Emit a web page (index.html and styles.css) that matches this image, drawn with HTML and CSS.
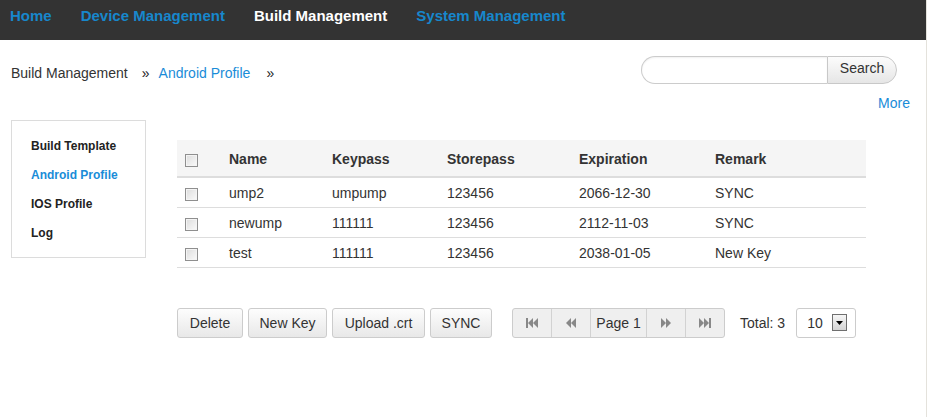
FILE: index.html
```html
<!DOCTYPE html>
<html>
<head>
<meta charset="utf-8">
<link rel="stylesheet" href="styles.css">
</head>
<body>
<div class="page">
  <nav class="topnav">
    <a class="nav-item">Home</a>
    <a class="nav-item">Device Management</a>
    <a class="nav-item active">Build Management</a>
    <a class="nav-item">System Management</a>
  </nav>

  <div class="toprow">
    <div class="breadcrumb">
      <span class="crumb">Build Management</span>
      <span class="sep">»</span>
      <a class="crumb link">Android Profile</a>
      <span class="sep sep-last">»</span>
    </div>
    <div class="search">
      <input class="search-input" type="text">
      <button class="search-btn">Search</button>
    </div>
  </div>
  <div class="morerow"><a class="more">More</a></div>

  <div class="content">
    <aside class="sidebar">
      <a class="side-item">Build Template</a>
      <a class="side-item active">Android Profile</a>
      <a class="side-item">IOS Profile</a>
      <a class="side-item">Log</a>
    </aside>

    <main class="main">
      <table class="grid">
        <thead>
          <tr>
            <th class="c-cb"><span class="cb"></span></th>
            <th class="c-name">Name</th>
            <th class="c-key">Keypass</th>
            <th class="c-store">Storepass</th>
            <th class="c-exp">Expiration</th>
            <th class="c-rem">Remark</th>
          </tr>
        </thead>
        <tbody>
          <tr>
            <td class="c-cb"><span class="cb"></span></td>
            <td>ump2</td><td>umpump</td><td>123456</td><td>2066-12-30</td><td>SYNC</td>
          </tr>
          <tr>
            <td class="c-cb"><span class="cb"></span></td>
            <td>newump</td><td>111111</td><td>123456</td><td>2112-11-03</td><td>SYNC</td>
          </tr>
          <tr>
            <td class="c-cb"><span class="cb"></span></td>
            <td>test</td><td>111111</td><td>123456</td><td>2038-01-05</td><td>New Key</td>
          </tr>
        </tbody>
      </table>

      <div class="toolbar">
        <div class="actions">
          <button class="btn w-del">Delete</button>
          <button class="btn w-new">New Key</button>
          <button class="btn w-up">Upload .crt</button>
          <button class="btn w-sync">SYNC</button>
        </div>
        <div class="pager">
          <span class="pg pg-icon">
            <svg width="12" height="10" viewBox="0 0 12 10"><rect x="0" y="0" width="2" height="10" fill="#888"/><polygon points="7,0 2,5 7,10" fill="#888"/><polygon points="12,0 7,5 12,10" fill="#888"/></svg>
          </span>
          <span class="pg pg-icon">
            <svg width="10" height="10" viewBox="0 0 10 10"><polygon points="5,0 0,5 5,10" fill="#888"/><polygon points="10,0 5,5 10,10" fill="#888"/></svg>
          </span>
          <span class="pg pg-page">Page 1</span>
          <span class="pg pg-icon">
            <svg width="10" height="10" viewBox="0 0 10 10"><polygon points="0,0 5,5 0,10" fill="#888"/><polygon points="5,0 10,5 5,10" fill="#888"/></svg>
          </span>
          <span class="pg pg-icon">
            <svg width="12" height="10" viewBox="0 0 12 10"><polygon points="0,0 5,5 0,10" fill="#888"/><polygon points="5,0 10,5 5,10" fill="#888"/><rect x="10" y="0" width="2" height="10" fill="#888"/></svg>
          </span>
        </div>
        <span class="total">Total: 3</span>
        <div class="select">
          <span class="select-val">10</span>
          <span class="select-arrow">
            <svg width="7" height="4" viewBox="0 0 7 4"><polygon points="0,0 7,0 3.5,4" fill="#000"/></svg>
          </span>
        </div>
      </div>
    </main>
  </div>
</div>
</body>
</html>
```

FILE: styles.css
```css
* { box-sizing: border-box; }
html, body { margin: 0; padding: 0; background: #fff; }
body {
  font-family: "Liberation Sans", Arial, sans-serif;
  font-size: 14px;
  color: #333;
}
.page {
  width: 927px;
  height: 417px;
  border-right: 1px solid #e4e2dc;
}
a { cursor: pointer; }

.topnav {
  height: 40px;
  background: #333;
  display: flex;
  align-items: flex-start;
  padding: 7px 0 0 10px;
  gap: 29px;
}
.nav-item {
  font-weight: bold;
  font-size: 15px;
  line-height: 18px;
  color: #1787cc;
}
.nav-item.active { color: #fff; }

.toprow {
  display: flex;
  justify-content: space-between;
  align-items: center;
  padding: 16px 29px 0 11px;
  height: 44px;
}
.breadcrumb {
  display: flex;
  align-items: center;
  line-height: 18px;
  padding-top: 5px;
}
.crumb { color: #333; }
.crumb.link { color: #1a8cd8; }
.sep { margin: 0 9px 0 14px; color: #222; }
.sep-last { margin-left: 16px; }

.search { display: flex; }
.search-input {
  width: 186px;
  height: 28px;
  border: 1px solid #ccc;
  border-right: none;
  border-radius: 14px 0 0 14px;
  outline: none;
  box-shadow: inset 0 1px 2px rgba(0,0,0,0.06);
}
.search-btn {
  width: 70px;
  height: 28px;
  border: 1px solid #c8c8c8;
  border-radius: 0 14px 14px 0;
  background: linear-gradient(#fcfcfc, #e6e6e6);
  font-family: inherit;
  font-size: 14px;
  color: #333;
  padding: 0 0 4px 0;
}

.morerow {
  display: flex;
  justify-content: flex-end;
  padding: 10px 16px 0 0;
  height: 30px;
}
.more { color: #1a8cd8; font-size: 14px; line-height: 18px; }

.content {
  display: flex;
  align-items: flex-start;
  padding: 6px 0 0 11px;
  gap: 31px;
}
.sidebar {
  width: 135px;
  height: 138px;
  border: 1px solid #dcdcdc;
  display: flex;
  flex-direction: column;
  padding: 18px 0 0 19px;
  gap: 15px;
}
.side-item {
  font-weight: bold;
  font-size: 12px;
  line-height: 14px;
  color: #222;
}
.side-item.active { color: #1a8cd8; }

.main { padding-top: 20px; }

.grid {
  border-collapse: collapse;
  width: 689px;
}
.grid th, .grid td {
  text-align: left;
  padding: 0;
  font-size: 14px;
  color: #333;
}
.grid thead th {
  background: #f5f5f5;
  height: 37px;
  font-weight: bold;
  border-bottom: 2px solid #ddd;
  padding-top: 1px;
}
.grid tbody td {
  height: 30px;
  border-bottom: 1px solid #ddd;
  padding-top: 1px;
}
.c-cb { width: 52px; padding-left: 8px !important; }
.c-name { width: 103px; }
.c-key { width: 115px; }
.c-store { width: 132px; }
.c-exp { width: 136px; }
.c-rem { width: 151px; }

.cb {
  display: inline-block;
  width: 13px;
  height: 13px;
  border: 1px solid #8f8f8f;
  background: linear-gradient(135deg, #dcdcdc, #fafafa);
  box-shadow: inset 0 0 0 1px #f4f4f4;
  vertical-align: middle;
  margin-top: 3px;
}

.toolbar {
  display: flex;
  align-items: center;
  margin-top: 40px;
}
.actions { display: flex; gap: 5px; }
.btn {
  height: 30px;
  border: 1px solid #ccc;
  border-radius: 3px;
  background: linear-gradient(#fdfdfd, #e8e8e8);
  font-family: inherit;
  font-size: 14px;
  color: #333;
  padding: 0;
}
.w-del { width: 66px; }
.w-new { width: 79px; }
.w-up { width: 93px; }
.w-sync { width: 62px; }

.pager {
  display: flex;
  margin-left: 20px;
  height: 30px;
  border: 1px solid #ccc;
  border-radius: 3px;
  background: #efefef;
  overflow: hidden;
}
.pg {
  display: flex;
  align-items: center;
  justify-content: center;
  border-left: 1px solid #d2d2d2;
  height: 100%;
}
.pg:first-child { border-left: none; }
.pg-icon { width: 39px; }
.pg:first-child { width: 38px; }
.pg-page { width: 56px; color: #333; }

.total { margin-left: 15px; color: #333; }
.select {
  display: flex;
  align-items: center;
  width: 60px;
  height: 30px;
  margin-left: 11px;
  border: 1px solid #ccc;
  border-radius: 3px;
  padding-left: 10px;
}
.select-val { width: 25px; color: #333; }
.select-arrow {
  width: 15px;
  height: 17px;
  border: 1px solid #6f6f6f;
  background: linear-gradient(#f6f6f6, #d4d4d4);
  display: flex;
  align-items: center;
  justify-content: center;
}
```
